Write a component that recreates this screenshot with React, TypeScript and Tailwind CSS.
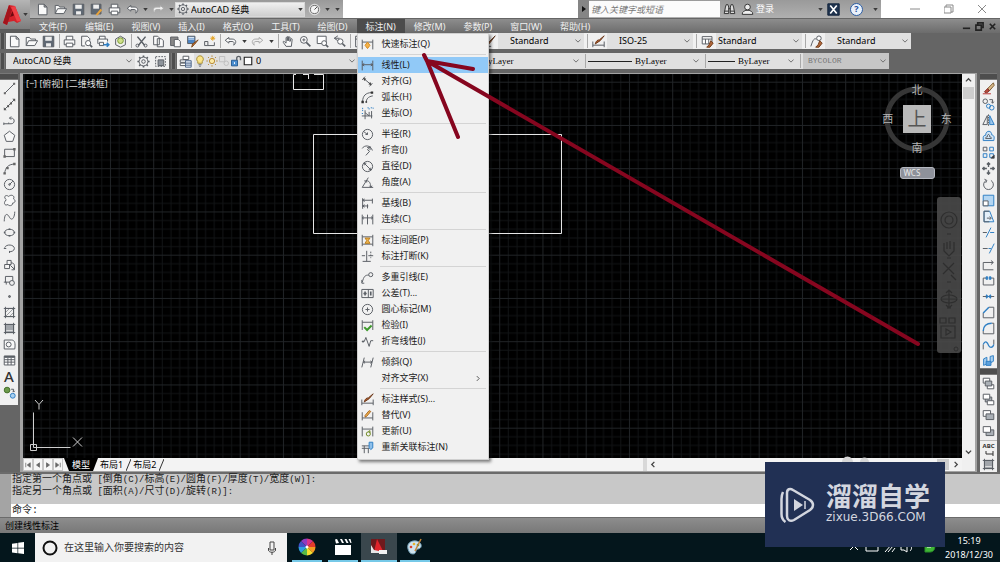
import type { ReactNode } from "react";

const BLUE = "#2f7fc4";
const ORANGE = "#c9742f";

// every drawing lives in a 16x16 box
const icons: Record<string, ReactNode> = {
  new: <path d="M3 1.500h7l3.500 3.500v9.500H3zM10 1.500V5h3.500" fill="#fafafa" />,
  open: <path d="M1.500 13V3h4l1.500 2h6v2M1.500 13l3-6h11l-3.500 6z" fill="#fafafa" />,
  save: (
    <>
      <path d="M1.500 1.500h13v13h-13z" fill="#5f6873" />
      <path d="M4 2h8v5H4zM5 10h6v4H5z" fill="#eee" stroke="none" />
    </>
  ),
  saveAs: (
    <>
      <path d="M1.500 1.500h12v12h-12z" fill="#5f6873" />
      <path d="M4 2h7v5H4z" fill="#eee" stroke="none" />
      <path d="M8 15l6-7" stroke="#e8a33c" strokeWidth="2.500" />
    </>
  ),
  print: (
    <>
      <path d="M4 6V1.500h8V6M4 12H1.500V6h13v6H12" fill="#fafafa" />
      <path d="M4 10h8v4.500H4z" fill="#fff" />
    </>
  ),
  preview: (
    <>
      <path d="M2 1.500h7l3 3V7M2 1.500v12h4" fill="#fafafa" />
      <circle cx="10" cy="10" r="3.200" fill="#fff" />
      <path d="M12.500 12.500L15 15" strokeWidth="2" />
    </>
  ),
  publish: (
    <>
      <path d="M3 5V1.500h7V5M2 10.500H1V5h12v3" fill="#fafafa" />
      <path d="M3 9h5v4H3z" />
      <path d="M8 12h6M12 9.500l2.500 2.500-2.500 2.500" stroke={BLUE} strokeWidth="2" />
    </>
  ),
  box3d: (
    <>
      <path d="M2 5l6-3.500L14 5v7l-6 3-6-3z" fill="#f1f1f1" />
      <circle cx="8" cy="7" r="3.500" fill="#cfe08a" stroke="#7a9a3a" />
    </>
  ),
  cut: (
    <>
      <path d="M3 2l9 11M13 2L4 13" strokeWidth="1.800" />
      <circle cx="3" cy="13" r="1.800" />
      <circle cx="13" cy="13" r="1.800" />
    </>
  ),
  copy: <path d="M2 1.500h5l2 2V12H2zM6.500 4.500h5l2.500 2.500v7.500H6.500z" fill="#fafafa" />,
  paste: (
    <>
      <path d="M2 2.500h9V13H2z" fill="#888" />
      <path d="M6.500 5.500h5l2.500 2.500v6.500H6.500z" fill="#fafafa" />
    </>
  ),
  match: (
    <>
      <path d="M2 1.500h9v9H2z" fill="#4d86c6" />
      <path d="M3 3h7M3 5h7" stroke="#e6eef8" />
      <path d="M15 6l-5 6-3 3 1-4z" fill={ORANGE} stroke="#7b4a22" />
    </>
  ),
  block: (
    <>
      <path d="M2 8h4v5h8V9M2 8v5h4" />
      <path d="M12 1v6M9 4h6M10 2l4 4M14 2l-4 4" stroke="#e3a224" />
    </>
  ),
  undo: <path d="M6 3L1.500 6.500 6 10V8h4c2.500 0 3 2 2 4.500 3.500-2 3.500-7.500-2-7.500H6z" fill="#fafafa" />,
  redo: <path d="M10 3l4.500 3.500L10 10V8H6c-2.500 0-3 2-2 4.500C.5 10.500.5 5 6 5h4z" fill="#eee" stroke="#aaa" />,
  pan: <path d="M5 14l-3.500-5c-.6-1 .8-1.700 1.500-.8L5 10V3.500c0-1 1.500-1 1.500 0V7 2.500c0-1 1.600-1 1.600 0V7l.4-4c.2-1 1.600-.8 1.500.2L9.800 8l1.200-3c.4-1 1.700-.5 1.500.4L11.500 14z" fill="#fafafa" />,
  zoom: (
    <>
      <circle cx="6" cy="6" r="4.200" fill="#fff" />
      <path d="M9 9l5 5" strokeWidth="2" />
      <path d="M4 6h4M6 4v4" />
    </>
  ),
  zoomWin: (
    <>
      <path d="M1.500 1.500h11v9h-11z" fill="#fff" />
      <circle cx="10" cy="10" r="3" fill="#fff" />
      <path d="M12 12l3 3" strokeWidth="2" />
    </>
  ),
  zoomPrev: (
    <>
      <path d="M6 1L1.500 4 6 7M2 4h6" />
      <circle cx="9" cy="8" r="3.300" fill="#fff" />
      <path d="M11.500 10.500L15 14" strokeWidth="2" />
    </>
  ),
  sheet: <path d="M2 1.500h12v13H2zM2 5h12M6 5v9" fill="#fafafa" />,
  brush: (
    <>
      <path d="M1 14h9" />
      <path d="M15 1L9 9l-5 5c1-5 2-6 4-6z" fill="#a8592b" stroke="#5d3a22" />
    </>
  ),
  dimStyle: (
    <>
      <path d="M1 8v7M15 8v7M1 12.500h14" />
      <path d="M15 1l-5 6-6 4c1-4 3-5 5-5z" fill="#b05a26" stroke="#6d3a1c" />
    </>
  ),
  tableStyle: (
    <>
      <path d="M1.500 2h12v9h-12zM1.500 5h12M5.500 5v6M9.500 5v6" fill="#fff" />
      <path d="M12 7l3 3-4 5H7l3-3z" fill="#b0673a" stroke="#74401f" />
    </>
  ),
  leaderStyle: (
    <>
      <path d="M1 14c3-9 4-10 7-9" />
      <circle cx="11" cy="4" r="2.800" fill="#fff" />
      <path d="M12 7l3 3-4 5H7l3-3z" fill="#b0673a" stroke="#74401f" />
    </>
  ),
  gear: (
    <>
      <circle cx="8" cy="8" r="5.400" />
      <circle cx="8" cy="8" r="2.200" />
      <path d="M8 .5v2M8 13.500v2M.5 8h2M13.500 8h2M2.700 2.700l1.400 1.400M11.900 11.900l1.400 1.400M13.300 2.700l-1.400 1.400M4.100 11.900l-1.400 1.400" strokeWidth="2" />
    </>
  ),
  workspace: (
    <>
      <path d="M2 2h12v12H2z" strokeDasharray="2 1.500" />
      <path d="M5 6h7v7H5z" fill="#8d939a" />
    </>
  ),
  layers: (
    <>
      <path d="M5 1.500h7v4H5zM1.500 6h7v3h-7zM1.500 10h7v3h-7z" fill="#fff" />
      <path d="M8 7h7v8H8zM8 10h7M8 12.500h7" fill="#dfe8f5" stroke="#526a8c" />
    </>
  ),
  bulb: (
    <>
      <path d="M8 1a4.500 4.500 0 0 0-3 7.800V11h6V8.800A4.500 4.500 0 0 0 8 1z" fill="#fbe58a" stroke="#a58a2c" />
      <path d="M6 13h4M7 15h2" />
    </>
  ),
  sun: (
    <>
      <circle cx="8" cy="8" r="3.500" fill="#fbe9a4" stroke="#b3832c" />
      <path d="M8 .5v2M8 13.500v2M.5 8h2M13.500 8h2M2.700 2.700l1.400 1.400M11.900 11.900l1.400 1.400M13.300 2.700l-1.400 1.400M4.100 11.900l-1.400 1.400" stroke="#b3832c" />
    </>
  ),
  viewport: (
    <g stroke="#bdbdbd">
      <path d="M2 2h7v7H2z" />
      <circle cx="11" cy="11" r="3" />
    </g>
  ),
  lock: (
    <>
      <path d="M2 7h8v7.500H2z" fill="#4c8fd0" stroke="#22588f" />
      <path d="M9 7V4c0-3 5-3 5 0v3" strokeWidth="1.800" />
      <path d="M6 9.500v2.500" stroke="#fff" />
    </>
  ),
  square: <path d="M3 3h10v10H3z" fill="#fff" stroke="#222" strokeWidth="1.500" />,
  binoculars: (
    <g stroke="#333">
      <path d="M3 5l1-3h2l1 3v8H1.500zM13 5l-1-3h-2L9 5v8h5.500z" fill="#ddd" />
      <path d="M7 7h2M1.500 10H7M9 10h5" />
    </g>
  ),
  user: (
    <g stroke="#333" fill="#eee">
      <circle cx="8" cy="5" r="3.500" />
      <path d="M1.500 14c0-4 3-4 4.500-5h4c1.500 1 4.500 1 4.500 5z" />
    </g>
  ),
  exchange: (
    <>
      <path d="M1 1h14v14H1z" fill="#20344f" stroke="#10233c" />
      <path d="M4 3l4 5-4 5M12 3L8 8l4 5" stroke="#fff" strokeWidth="2" />
    </>
  ),
  wheel: (
    <>
      <circle cx="8" cy="8" r="6.500" fill="#f4f4f4" stroke="#dcdcdc" />
      <circle cx="8" cy="8" r="5" stroke="#666" />
      <path d="M8 8l3-3" stroke="#444" />
    </>
  ),
  // draw
  line: (
    <>
      <path d="M2.500 13.500l11-11" />
      <path d="M1 12.500h2.500V15H1zM12.500 1H15v2.500h-2.500z" fill="#666" stroke="none" />
    </>
  ),
  xline: (
    <>
      <path d="M2.500 13.500l11-11" />
      <path d="M1 15v-3.500L4.500 15zM15 1v3.500L11.500 1zM5 9h2.500v2.500H5zM8.500 5.500H11V8H8.500z" fill="#555" stroke="none" />
    </>
  ),
  pline: <path d="M1 12h9c5 0 5-7 0-7H8M1 10.500v3M7 12v-1.500M10 3L8 5l2 2" />,
  polygon: <path d="M8 1.500l6.500 5L12 14H4L1.500 6.500z" fill="#f7f7f7" />,
  rect: (
    <>
      <path d="M2 4h12v9H2z" />
      <path d="M12.500 2.500h3v3h-3zM.5 11.500h3v3h-3z" fill="#666" stroke="none" />
    </>
  ),
  arc: (
    <>
      <path d="M2 14C3 7 6 3 14 2.500" />
      <path d="M.5 12.500h3v3h-3zM4 6h3v3H4zM12.500 1h3v3h-3z" fill="#666" stroke="none" />
    </>
  ),
  circle: (
    <>
      <circle cx="8" cy="8" r="6.300" />
      <path d="M8 8l4-4" />
      <circle cx="8" cy="8" r="1" />
    </>
  ),
  cloud: <path d="M4 7C0 4 3 0 7 3c3-3 8-1 6 3 3 2 2 5-1 5 0 4-5 4-6 2-4 2-6-2-2-6z" fill="#f7f7f7" />,
  spline: <path d="M1.500 14C2 2 6 5 8 9s6 3 6.500-7" />,
  ellipse: (
    <>
      <ellipse cx="8" cy="8" rx="6" ry="4" />
      <path d="M8 3v2M8 11v2M1 8h2M13 8h2" strokeWidth="2" />
    </>
  ),
  ellipseArc: <path d="M2 7c2-5 12-4 12 1 0 3-4 4-6 4M1 8h3M8 11v2.500" />,
  insert: (
    <>
      <path d="M5 3h5v5H5zM2 8h6v5H2z" fill="#f5f5f5" />
      <path d="M10 6c5 0 4 4 4 8M9 9l5 5M14 11v3.500h-3.500" />
    </>
  ),
  makeBlock: (
    <>
      <path d="M3 3h9v7H3zM1 10h3v3" />
      <circle cx="11" cy="11" r="3" fill="#eee" />
    </>
  ),
  point: <circle cx="8" cy="8" r="1.200" fill="#777" />,
  hatch: (
    <>
      <path d="M3 3h10v10H3zM1 3h14M1 13h14M3 1v14M13 1v14" />
      <path d="M3 8l5-5M3 13L13 3M8 13l5-5" strokeWidth=".7" />
    </>
  ),
  gradient: (
    <>
      <path d="M3 3h10v10H3z" fill="#a2a6ab" />
      <path d="M1 3h14M1 13h14M3 1v14M13 1v14" />
      <path d="M4 10.500h8" stroke="#ddd" />
    </>
  ),
  region: (
    <>
      <path d="M1.500 2.500h9c4 0 5 4 4 11h-13z" fill="#f7f7f7" />
      <circle cx="7" cy="8" r="3" />
    </>
  ),
  table: (
    <>
      <path d="M1.500 2.500h13v11h-13zM1.500 7h13M1.500 10h13M6 5v8.500M10 5v8.500" fill="#fff" />
      <path d="M1.500 3.500h13" strokeWidth="2.500" />
    </>
  ),
  addSel: (
    <>
      <circle cx="5" cy="5" r="3.500" fill="#6c9a4a" stroke="#45702a" />
      <circle cx="12" cy="12" r="3" fill="#a9d0f0" stroke={BLUE} />
      <path d="M10 4h3v3M12 6l1 1.500L14.500 6" />
    </>
  ),
  // modify
  erase: (
    <>
      <path d="M1 14.500h10" stroke="#b33" />
      <path d="M14 1L7 8l2 3 6-7z" fill="#d8b98a" stroke="#7b5b2f" />
      <path d="M7 8l-4 4c1 2 3 1 3.500 1L9 11z" fill="#b94a3c" stroke="#7d2d24" />
    </>
  ),
  copyObj: (
    <>
      <circle cx="4" cy="4" r="2.800" />
      <path d="M9 2h4v4M11.500 4.500L13 6.500l1.500-2" />
      <circle cx="8" cy="10" r="2.500" stroke={BLUE} />
      <circle cx="12" cy="12" r="2.800" stroke={BLUE} />
    </>
  ),
  mirror: (
    <>
      <path d="M6.500 2v11H1z" />
      <path d="M9.500 2v11H15z" fill="#9cc7ec" stroke={BLUE} />
      <path d="M8 .5v15" strokeDasharray="2 1" />
    </>
  ),
  offset: (
    <>
      <path d="M1.500 13v-4c0-2 2-2.500 3-2.500C4.500 0 12 0 12 6c4 1 3 4 2.500 7z" fill="#cfe4f6" stroke={BLUE} />
      <path d="M4.500 10.500h7c0-2-1-2-2-2 0-4-3-4-3 0-1 0-2 0-2 2z" />
    </>
  ),
  array: (
    <>
      <path d="M1.500 1.500H6V6H1.500z" />
      <path d="M9.500 1.500H14V6H9.500zM1.500 9.500H6V14H1.500zM9.500 9.500H14V14H9.500z" stroke={BLUE} />
      <path d="M11 15h4v-4z" fill="#222" />
    </>
  ),
  move: <path d="M8 1v5M8 10v5M1 8h5M10 8h5M6 3l2-2 2 2M6 13l2 2 2-2M3 6L1 8l2 2M13 6l2 2-2 2" strokeWidth="1.700" />,
  rotate: <path d="M5 3a6 6 0 1 0 6 0M3 1.500L6 3 4.500 6" />,
  scale: (
    <>
      <path d="M1.500 1.500h13v13h-13z" fill="#b4d6f2" stroke={BLUE} />
      <path d="M1.500 8.500h6v6h-6z" fill="#fff" />
    </>
  ),
  stretch: (
    <>
      <path d="M2.500 1.500h7l5 13h-12z" stroke={BLUE} fill="#e4f0fa" />
      <path d="M9 1.500H2.500v13H9M6 10h5M9.500 8l2 2-2 2" />
    </>
  ),
  trim: (
    <>
      <path d="M1 8h5" />
      <path d="M10 8h5" stroke={BLUE} />
      <path d="M5 14l6-12" stroke={BLUE} />
    </>
  ),
  extend: (
    <>
      <path d="M1 8h6" />
      <path d="M8 8h3" stroke={BLUE} />
      <path d="M9 14l6-12" stroke={BLUE} />
    </>
  ),
  breakPt: <path d="M1.500 14.500v-9h12M11 3l3 2.500L11 8M1.500 14.500H14" />,
  breakObj: (
    <>
      <path d="M6 5H1.500v8.500h13V5H10" />
      <path d="M5 3.500h2v3H5zM9 3.500h2v3H9z" fill={BLUE} stroke={BLUE} />
    </>
  ),
  join: (
    <>
      <path d="M1 8h14" />
      <path d="M5 6l2 2-2 2M11 6L9 8l2 2" stroke={BLUE} strokeWidth="1.800" />
    </>
  ),
  chamfer: (
    <>
      <path d="M1.500 8.500v6h13v-13h-6" />
      <path d="M1.500 8.500l7-7" stroke={BLUE} strokeWidth="1.800" />
    </>
  ),
  fillet: (
    <>
      <path d="M1.500 11v3.500h13v-13H12" />
      <path d="M1.500 11c0-6 4-9.500 10.500-9.500" stroke={BLUE} strokeWidth="1.800" />
    </>
  ),
  blend: (
    <>
      <path d="M1.500 14V8M14.500 2v6" />
      <path d="M1.500 8C4 2 7 6 8 9s5 4 6.500-1" stroke={BLUE} strokeWidth="1.500" />
    </>
  ),
  explode: (
    <>
      <path d="M2 6l4-2v8l-4 2zM10 3l4-1v7l-4 2z" fill="#a8cff0" stroke={BLUE} />
      <path d="M5 9h6v5H5z" fill="#5ea1dc" stroke={BLUE} />
    </>
  ),
  front: (
    <>
      <path d="M1.500 1.500h8v6h-8zM6.500 9.500h8v5h-8z" fill="#fff" />
      <path d="M4 5h8v6H4z" fill="#aab0b6" />
    </>
  ),
  back: (
    <>
      <path d="M4 5h8v6H4z" fill="#aab0b6" />
      <path d="M1.500 1.500h8v6h-8zM6.500 9.500h8v5h-8z" fill="#fff" />
    </>
  ),
  above: (
    <>
      <path d="M1.500 2h9v7h-9z" fill="#fff" />
      <path d="M5 6h9.500v7H5z" fill="#aab0b6" />
    </>
  ),
  under: (
    <>
      <path d="M5 6h9.500v7H5z" fill="#aab0b6" />
      <path d="M1.500 2h9v7h-9z" fill="#fff" />
    </>
  ),
  // dimension menu
  quickDim: (
    <>
      <path d="M1.500 2v12M14.500 2v12M1.500 5h13" />
      <path d="M8 5l3 4-3 4-3-4z" fill="#f3b24a" stroke="#d88a1c" />
    </>
  ),
  linear: <path d="M1.500 2v12M14.500 2v12M1.500 7h13M4 5.500L1.500 7 4 8.500M12 5.500L14.500 7 12 8.500" />,
  aligned: (
    <>
      <path d="M3.500 4.500l8.500 7M1.500 6L5 2M10.500 14l3.500-4" />
      <path d="M2.500 3.500l4 1-2.500 3zM13 12.500l-4-1 2.500-3z" fill="#444" stroke="none" />
    </>
  ),
  arcLen: (
    <>
      <path d="M2 13C2 6 6 2 13 2M6.500 14c0-4 2-7 8-8" />
      <path d="M.5 12h3v3h-3zM12 .5h3v3h-3zM5.500 12.500h2v2h-2z" fill="#333" stroke="none" />
    </>
  ),
  ordinate: (
    <>
      <path d="M5 4v7h9M5 7l5 4V6M13 5v9M1 11h4v4" />
      <path d="M2 1v4M1 8h2M8 1h2v3M12 1h3v2" stroke={BLUE} strokeDasharray="1.500 1" />
    </>
  ),
  radius: (
    <>
      <circle cx="8" cy="8" r="6.300" />
      <path d="M8 8L3.500 4.500M5.500 8H8V5.500" />
    </>
  ),
  jogged: <path d="M1.500 5.500C4 1 12 1 14 8M11.500 3.500L8 7l2.500 2L6 14M7.500 4.500l4-1-.5 4" />,
  diameter: (
    <>
      <circle cx="8" cy="8" r="6.300" />
      <path d="M3.500 3.500l9 9M4 6.500V4h2.500M12 9.500V12H9.500" />
    </>
  ),
  angular: <path d="M15 14H1.500L9 2M6 6c4-1 6 3 6 8M4 6l2 0 1 2M10.500 12l1.500 2 1.500-2" />,
  baseline: <path d="M2 1.500v13M8 9v5M14 2v6M2 4h12M2 11h7M4.500 2.500L2 4l2.500 1.500M4.500 9.500L2 11l2.500 1.500" />,
  continued: <path d="M1.500 2v12M8 2v12M14.500 2v12M1.500 6h13M3.500 4.500L1.500 6l2 1.500M12.500 4.500l2 1.500-2 1.500" />,
  spacing: (
    <>
      <path d="M1.500 1v14M14.500 1v14M1.500 3.500h13M1.500 12.500h13" />
      <path d="M5 5h6L9 8l2 3.500H5L7 8z" fill="#f0b44c" stroke="#b87d1f" />
    </>
  ),
  dimBreak: (
    <>
      <path d="M7 1v13M1 7h4M9 7h6M2 14h10" />
      <path d="M12 2v8" strokeDasharray="2 1.500" />
    </>
  ),
  leader: (
    <>
      <path d="M1.500 14c2-8 4-9 8-9M1 11v4h3" />
      <circle cx="12" cy="4.500" r="2.500" />
    </>
  ),
  tolerance: (
    <>
      <path d="M1 3h14v10H1zM9 3v10" />
      <path d="M3 8h4M5 5.500v5M12 5.500v5" strokeWidth="2" />
    </>
  ),
  center: (
    <>
      <circle cx="8" cy="8" r="6.300" />
      <path d="M5.500 8h5M8 5.500v5" />
    </>
  ),
  inspect: (
    <>
      <path d="M1.500 1.500v12M14.500 1.500v12M1.500 4h13" />
      <path d="M4 10l3.500 3.500L13 8" stroke="#3f9a2e" strokeWidth="2.500" />
    </>
  ),
  jogLine: <path d="M1 8h3l2-5 4 11 2-7h3M2.500 6.500v3" />,
  oblique: <path d="M4 2L1 14M15 2l-3 12M3 7.500h10.500M5 6L3 7.500 5 9M11.500 6l2 1.500-2 1.500" />,
  override: (
    <>
      <path d="M1.500 4v10M14.500 4v10M1.500 11h13" />
      <path d="M12 3L7 9 5 10l0-2 5-6z" fill="#f0b44c" stroke="#a8641f" />
    </>
  ),
  update: (
    <>
      <path d="M1.500 2v12M14.500 2v12M1.500 5h13" />
      <circle cx="9" cy="11" r="2.500" stroke="#6f8a22" />
      <path d="M9 8l2-1v3" stroke="#6f8a22" />
    </>
  ),
  reassoc: (
    <>
      <path d="M1 6h9M4 6v9M9 9v6M1 9h9" />
      <path d="M10 1.500h4.500v7L12 10.500 10 8.500z" fill="#8fc0ea" stroke={BLUE} />
    </>
  ),
};

function Icon({ name, className = "size-[13px]" }: { name: string; className?: string }) {
  return (
    <svg viewBox="0 0 16 16" className={`${className} shrink-0`} fill="none" stroke="#5a5f65" strokeWidth="1.200" aria-hidden="true">
      {icons[name]}
    </svg>
  );
}

function ToolButton({ name, label, className = "w-[17px]" }: { name: string; label?: string; className?: string }) {
  return (
    <button type="button" aria-label={label ?? name} className={`${className} flex h-4 shrink-0 items-center justify-center`}>
      <Icon name={name} />
    </button>
  );
}

function Caret({ className = "w-[10px]" }: { className?: string }) {
  return (
    <button type="button" aria-label="more" className={`${className} flex h-4 shrink-0 items-center justify-center`}>
      <svg viewBox="0 0 6 4" className="h-[3px] w-[5px]" aria-hidden="true">
        <path d="M0 0h6L3 4z" fill="#3a3a3a" />
      </svg>
    </button>
  );
}

function Sep({ className = "w-1" }: { className?: string }) {
  return (
    <span className={`${className} flex h-4 shrink-0 justify-center py-px`}>
      <span className="w-px bg-[#a9a9a9]" />
    </span>
  );
}

type ComboProps = { label: string; value: string; className: string; selectClass?: string; disabled?: boolean };

function Combo({ label, value, className, selectClass = "pl-3", disabled }: ComboProps) {
  return (
    <span className={`${className} relative flex h-4 shrink-0 items-center`}>
      <select aria-label={label} disabled={disabled} className={`${selectClass} h-4 w-full appearance-none bg-transparent leading-4 outline-none`}>
        <option>{value}</option>
      </select>
      <svg viewBox="0 0 8 5" className="pointer-events-none absolute right-[3px] h-1 w-[6px]" fill="none" stroke="#666" strokeWidth="1.200" aria-hidden="true">
        <path d="M.5.5L4 4 7.500.5" />
      </svg>
    </span>
  );
}

const dimensionMenu = [
  [["quickDim", "快速标注(Q)"]],
  [["linear", "线性(L)"], ["aligned", "对齐(G)"], ["arcLen", "弧长(H)"], ["ordinate", "坐标(O)"]],
  [["radius", "半径(R)"], ["jogged", "折弯(J)"], ["diameter", "直径(D)"], ["angular", "角度(A)"]],
  [["baseline", "基线(B)"], ["continued", "连续(C)"]],
  [["spacing", "标注间距(P)"], ["dimBreak", "标注打断(K)"]],
  [["leader", "多重引线(E)"], ["tolerance", "公差(T)..."], ["center", "圆心标记(M)"], ["inspect", "检验(I)"], ["jogLine", "折弯线性(J)"]],
  [["oblique", "倾斜(Q)"], ["", "对齐文字(X)"]],
  [["dimStyle", "标注样式(S)..."], ["override", "替代(V)"], ["update", "更新(U)"], ["reassoc", "重新关联标注(N)"]],
];

function DimensionMenu() {
  return (
    <div className="absolute top-full left-0 z-20 w-[132px] border border-[#d0d0d0] bg-[#f1f1f1] pt-[2px] pb-1 text-[9px] text-[#1a1a1a] shadow-[2px_2px_3px_rgba(0,0,0,0.5)]">
      {dimensionMenu.map((group, i) => (
        <div key={i}>
          {i > 0 && (
            <div className="flex h-[5px] items-center pr-[2px] pl-[22px]">
              <div className="h-px flex-1 bg-[#d4d4d4]" />
            </div>
          )}
          {group.map(([icon, text]) => (
            <button
              key={text}
              type="button"
              className={`flex h-4 w-full items-center pr-2 pl-[3px] text-left leading-4 ${icon === "linear" ? "bg-[#91c9f7]" : ""}`}
            >
              <Icon name={icon} />
              <span className="ml-2 whitespace-nowrap">{text}</span>
              {icon === "" && (
                <svg viewBox="0 0 5 8" className="ml-auto h-[7px] w-1" fill="none" stroke="#333" aria-hidden="true">
                  <path d="M1 1l3 3-3 3" />
                </svg>
              )}
            </button>
          ))}
        </div>
      ))}
    </div>
  );
}

function TitleBar() {
  return (
    <div className="flex h-[18px] bg-white">
      <div className="flex items-center bg-linear-to-b from-[#9a9a9a] to-[#b4b4b4] pl-[3px]">
        {["new", "open", "save", "saveAs", "print", "undo"].map((n) => (
          <ToolButton key={n} name={n} className="w-[18px]" />
        ))}
        <Caret className="w-2" />
        <ToolButton name="redo" className="w-[18px]" />
        <Caret className="w-2" />
        <span className="flex h-[15px] w-[130px] items-center border border-[#d8d8d8] bg-linear-to-b from-[#f0f0f0] to-[#cfcfcf] pl-px">
          <Icon name="gear" className="size-3" />
          <select aria-label="工作空间" className="h-[13px] flex-1 appearance-none bg-transparent pl-[2px] leading-[13px] text-black">
            <option>AutoCAD 经典</option>
          </select>
          <Caret className="w-2" />
        </span>
        <ToolButton name="wheel" className="w-[18px]" />
        <Caret className="w-2" />
        <Caret className="w-3" />
      </div>
      <div className="flex-1" />
      <div className="flex w-[303px] items-center bg-linear-to-b from-[#9a9a9a] to-[#b0b0b0]">
        <button type="button" aria-label="展开" className="flex h-full w-[11px] items-center justify-center bg-[#858585]">
          <svg viewBox="0 0 4 6" className="h-[6px] w-1" aria-hidden="true">
            <path d="M0 0v6l4-3z" fill="#111" />
          </svg>
        </button>
        <input aria-label="搜索" placeholder="键入关键字或短语" className="h-4 w-[131px] bg-[#fbfbfb] pl-[2px] text-[9px] italic outline-none placeholder:text-[#777]" />
        <ToolButton name="binoculars" className="w-[18px]" />
        <ToolButton name="user" className="w-[18px]" />
        <button type="button" className="whitespace-nowrap text-white">登录</button>
        <span className="flex-1" />
        <Caret className="w-2" />
        <ToolButton name="exchange" className="w-[18px]" />
        <button type="button" aria-label="帮助" className="mx-2 flex size-[13px] items-center justify-center rounded-full border border-[#2c5da3] bg-[#e9f1fb] font-bold text-[#1d4f9c]">?</button>
        <Caret className="mr-[2px] w-2" />
      </div>
      <div className="flex w-[119px] items-center justify-between pr-[13px] pl-[29px]">
        {["M0 5h10", "M2 3V1h7v7H7M0 3h7v6H0z", "M1 1l8 8M9 1l-8 8"].map((d) => (
          <button key={d} type="button" aria-label="window" className="flex size-[10px] items-center">
            <svg viewBox="0 0 10 10" className="size-[10px]" fill="none" stroke="#8a8a8a" aria-hidden="true">
              <path d={d} />
            </svg>
          </button>
        ))}
      </div>
    </div>
  );
}

const menus = ["文件(F)", "编辑(E)", "视图(V)", "插入(I)", "格式(O)", "工具(T)", "绘图(D)", "标注(N)", "修改(M)", "参数(P)", "窗口(W)", "帮助(H)"];

function MenuBar() {
  return (
    <nav className="flex h-[15px] border-t border-[#666] bg-linear-to-b from-[#8d8d8d] to-[#6c6c6c] text-[#f0f0f0]">
      {menus.map((m) => (
        <div key={m} className="relative flex">
          <button
            type="button"
            className={`pr-[9px] pl-2 leading-[13px] whitespace-nowrap first:pl-[9px] ${m === "标注(N)" ? "bg-[#4c4c4c]" : ""}`}
          >
            {m}
          </button>
          {m === "标注(N)" && <DimensionMenu />}
        </div>
      ))}
      <div className="ml-auto flex items-center gap-1 pr-[3px]">
        {["M1 7h8", "M3 3V1h6v5H7M1 3.500h6V9H1z", "M2 2l6 6M8 2L2 8"].map((d) => (
          <button key={d} type="button" aria-label="document" className="size-[9px]">
            <svg viewBox="0 0 10 10" className="size-[9px]" fill="none" stroke="#222" strokeWidth="1.800" aria-hidden="true">
              <path d={d} />
            </svg>
          </button>
        ))}
      </div>
    </nav>
  );
}

function Header() {
  return (
    <header className="flex">
      <button type="button" aria-label="应用程序菜单" className="flex w-[30px] items-center border-b-4 border-[#5c5c5c] bg-linear-to-b from-[#b5b5b5] to-[#7d7d7d] pl-[3px]">
        <svg viewBox="0 0 18 22" className="h-[22px] w-[18px]" aria-hidden="true">
          <path d="M6 1l6 1 6 15-4 2-3-2-6 1-1 3-4-2z" fill="#d3222a" />
          <path d="M6 1L0 19l4 2 2-6 3-9z" fill="#a3141c" />
          <path d="M7 13l4-1.500L9.500 7z" fill="#6f0a10" />
          <path d="M8 3l4-1 6 15-4 .5z" fill="#ee4045" />
        </svg>
        <Caret className="w-2" />
      </button>
      <div className="min-w-0 flex-1">
        <TitleBar />
        <MenuBar />
      </div>
    </header>
  );
}

const Grip = () => <span className="mr-px w-[5px] shrink-0 border-x border-[#777] bg-[#4d4d4d]" />;

function StyleGroup({ icon, label, value, selectClass }: { icon: string; label: string; value: string; selectClass?: string }) {
  return (
    <>
      <Sep className="w-[6px]" />
      <ToolButton name={icon} label={label} />
      <Combo label={label} value={value} className="w-[86px] bg-[#e0e0e0]" selectClass={selectClass} />
    </>
  );
}

function Toolbars() {
  return (
    <div className="flex flex-col gap-1 bg-[#656565] pb-1">
      <div className="flex h-4">
        <Grip />
        <div className="flex bg-[#f0f0f0]">
          {["new", "open", "save"].map((n) => <ToolButton key={n} name={n} />)}
          <Sep />
          {["print", "preview", "publish", "box3d"].map((n) => <ToolButton key={n} name={n} />)}
          <Sep />
          {["cut", "copy", "paste", "match", "block"].map((n) => <ToolButton key={n} name={n} />)}
          <Sep />
          <ToolButton name="undo" />
          <Caret />
          <ToolButton name="redo" />
          <Caret />
          <Sep />
          {["pan", "zoom", "zoomWin", "zoomPrev"].map((n) => <ToolButton key={n} name={n} />)}
          <Sep />
          {["sheet", "table", "layers", "copy", "box3d", "match", "gear"].map((n) => <ToolButton key={n} name={n} />)}
          <Sep />
          <StyleGroup icon="brush" label="文字样式" value="Standard" />
          <StyleGroup icon="dimStyle" label="标注样式" value="ISO-25" />
          <StyleGroup icon="tableStyle" label="表格样式" value="Standard" selectClass="pl-[2px]" />
          <StyleGroup icon="leaderStyle" label="多重引线样式" value="Standard" />
        </div>
      </div>
      <div className="flex h-4">
        <Grip />
        <div className="flex bg-[#f0f0f0]">
          <Combo label="工作空间列表" value="AutoCAD 经典" className="w-[129px] bg-[#e0e0e0]" selectClass="pl-[7px]" />
          <ToolButton name="gear" />
          <ToolButton name="workspace" />
        </div>
        <span className="w-[2px]" />
        <Grip />
        <div className="flex bg-[#f0f0f0]">
          <ToolButton name="layers" />
          <div className="flex items-center bg-[#e0e0e0]">
            {["bulb", "sun", "viewport", "lock", "square"].map((n) => (
              <Icon key={n} name={n} className="size-3" />
            ))}
            <Combo label="图层" value="0" className="w-[104px]" selectClass="pl-[2px]" />
          </div>
          {["layers", "sheet", "copy", "match", "square", "gear"].map((n, i) => <ToolButton key={i} name={n} />)}
          <Sep className="w-[6px]" />
          <div className="flex items-center bg-[#e0e0e0] [font-family:'Liberation_Serif',serif]">
            <Combo label="颜色" value="ByLayer" className="w-[116px]" selectClass="pl-4" />
            <Sep className="w-[6px]" />
            <span className="h-px w-11 bg-[#222]" />
            <Combo label="线型" value="ByLayer" className="w-[70px]" selectClass="pl-[3px]" />
            <Sep className="w-[6px]" />
            <span className="h-px w-[27px] bg-[#222]" />
            <Combo label="线宽" value="ByLayer" className="w-[62px]" selectClass="pl-[3px]" />
            <Sep className="w-[6px]" />
            <Combo
              label="打印样式"
              value="BYCOLOR"
              disabled
              className="w-[86px] bg-[#c6c6c6]"
              selectClass="pl-[5px] text-[8px] text-[#777] [font-family:'Liberation_Mono',monospace]"
            />
          </div>
        </div>
      </div>
    </div>
  );
}

const drawTools = ["line", "xline", "pline", "polygon", "rect", "arc", "circle", "cloud", "spline", "ellipse", "ellipseArc", "insert", "makeBlock", "point", "hatch", "gradient", "region", "table"];
const modifyTools = ["erase", "copyObj", "mirror", "offset", "array", "move", "rotate", "scale", "stretch", "trim", "extend", "breakPt", "breakObj", "join", "chamfer", "fillet", "blend", "explode"];

const SideGrip = () => <div className="h-[7px] shrink-0 border-y border-[#777] bg-[#4d4d4d]" />;

function DrawToolbar() {
  return (
    <aside className="w-[18px] shrink-0">
      <SideGrip />
      <div className="flex flex-col bg-[#f0f0f0] pb-[5px]">
        {drawTools.map((n) => <ToolButton key={n} name={n} className="w-[18px]" />)}
        <button type="button" className="h-4 text-[15px] leading-4 font-medium text-[#333]">A</button>
        <ToolButton name="addSel" className="w-[18px]" />
      </div>
    </aside>
  );
}

function ModifyToolbar() {
  return (
    <aside className="mr-[3px] flex w-[17px] shrink-0 flex-col overflow-hidden">
      <SideGrip />
      <div className="flex flex-col bg-[#f0f0f0]">
        {modifyTools.map((n) => <ToolButton key={n} name={n} />)}
      </div>
      <SideGrip />
      <div className="flex flex-1 flex-col bg-[#f0f0f0]">
        {["front", "back", "above", "under"].map((n) => <ToolButton key={n} name={n} />)}
        <div className="my-px h-px shrink-0 bg-[#bbb]" />
        <button type="button" className="h-[14px] shrink-0 text-[6px] leading-[8px] font-bold text-[#333]">
          ABC
          <svg viewBox="0 0 14 6" className="ml-px h-[6px] w-[14px]" fill="none" stroke="#333" aria-hidden="true">
            <path d="M5 1v3h7M12 1v5" />
          </svg>
        </button>
        <ToolButton name="gradient" />
      </div>
    </aside>
  );
}

function ViewCube() {
  return (
    <div className="absolute top-[10px] right-[10px] flex w-[70px] flex-col items-center text-[11px] text-[#b5b5b5]">
      <div className="grid size-[70px] grid-cols-3 grid-rows-3 place-items-center rounded-full bg-[radial-gradient(circle,transparent_27px,#363636_28px,#363636_32px,transparent_33px)]">
        <span className="col-start-2 self-start leading-3">北</span>
        <span className="row-start-2 -ml-3">西</span>
        <span className="row-start-2 flex size-7 items-center justify-center bg-[#b9b9b9] text-[19px] text-[#555]">上</span>
        <span className="row-start-2 -mr-3">东</span>
        <span className="col-start-2 row-start-3 self-end leading-3">南</span>
      </div>
      <button type="button" className="mt-[13px] flex h-3 w-[35px] items-center rounded-[3px] border border-[#b5b8c0] bg-[#8e919a] pl-[3px] text-[8px] text-[#e8e8e8]">
        WCS
      </button>
    </div>
  );
}

function NavBar() {
  return (
    <div className="absolute top-[123px] right-px flex h-[156px] w-6 flex-col items-center justify-between rounded-[3px] bg-[#4a4a4a] py-3 opacity-90">
      <svg viewBox="0 0 24 132" className="h-[132px] w-6" fill="none" stroke="#333" strokeWidth="1.200" aria-hidden="true">
        <circle cx="12" cy="11" r="8" />
        <circle cx="12" cy="11" r="4" />
        <path d="M10 25h4M10 49h4M10 73h4M10 99h4M7 34v8l5 5 5-5v-9M10 33v7M13 32v8M6 54l11 11M17 54L6 65M14 66l5 5M12 82v16M4 90h16M9 84l3-3 3 3M9 96l3 3 3-3M3 109h6v5H3zM12 109h6v5h-6zM4 117h14v12H4zM9 120v6l5-3z" />
        <ellipse cx="12" cy="90" rx="8" ry="4" />
      </svg>
      <svg viewBox="0 0 24 8" className="absolute inset-x-0 bottom-0 h-2 w-6" fill="none" stroke="#333" aria-hidden="true">
        <circle cx="19" cy="4" r="2" />
      </svg>
    </div>
  );
}

function Canvas() {
  return (
    <div className="relative min-h-0 flex-1 overflow-hidden bg-black">
      <svg className="absolute inset-0 size-full" fill="none" aria-hidden="true">
        <defs>
          <pattern id="grid" x="43.700" y="7.700" width="43.250" height="43.250" patternUnits="userSpaceOnUse">
            <path d="M9.150 0v43.250M17.800 0v43.250M26.450 0v43.250M35.100 0v43.250M0 9.150h43.250M0 17.800h43.250M0 26.450h43.250M0 35.100h43.250" stroke="#111315" />
            <path d="M.5 0v43.250M0 .5h43.250" stroke="#212427" />
          </pattern>
        </defs>
        <rect width="100%" height="100%" fill="url(#grid)" />
        <g stroke="#e6e6e6">
          <path d="M273 .5h-2.500v15h30V.5H291M280 .5h6M285.500 1v4" />
          <path d="M290.500 60.500h248v99h-248z" />
        </g>
        <path
          d="M7.500 370.500h6v6h-6zM10.500 373.500v-35M10.500 373.500h37M50 363.500l9 9M59 363.500l-9 9M12 326l4 4.500 4-4.500M16 330.500v5"
          stroke="#cfcfcf"
        />
      </svg>
      <p className="relative pt-1 pl-[3px] text-[9px] leading-3 text-[#dcdcdc]">[−] [俯视] [二维线框]</p>
      <ViewCube />
      <NavBar />
    </div>
  );
}

function Chevron({ d, label }: { d: string; label: string }) {
  return (
    <button type="button" aria-label={label} className="flex size-[13px] items-center justify-center">
      <svg viewBox="0 0 8 8" className="size-[7px]" fill="none" stroke="#444" strokeWidth="1.500" aria-hidden="true">
        <path d={d} />
      </svg>
    </button>
  );
}

function LayoutTabs() {
  return (
    <div className="flex h-[13px] bg-[#f3f3f3] text-[9px] leading-[13px] text-black">
      {["M1 1v6M7 1L3 4l4 3z", "M6 1L2 4l4 3z", "M2 1l4 3-4 3z", "M7 1v6M1 1l4 3-4 3z"].map((d) => (
        <button key={d} type="button" aria-label="layout" className="flex w-[10px] items-center justify-center border border-[#c6c6c6] bg-[#f6f6f6]">
          <svg viewBox="0 0 8 8" className="size-[6px]" fill="#666" stroke="#666" aria-hidden="true">
            <path d={d} />
          </svg>
        </button>
      ))}
      <button type="button" className="ml-px bg-black px-2 text-white [clip-path:polygon(0_0,100%_0,calc(100%-5px)_100%,5px_100%)]">模型</button>
      {["布局1", "布局2"].map((t) => (
        <button key={t} type="button" className="flex items-center gap-[3px] pl-[2px] whitespace-nowrap">
          {t}
          <svg viewBox="0 0 5 12" className="h-3 w-[5px]" stroke="#333" aria-hidden="true">
            <path d="M5 0L0 12" />
          </svg>
        </button>
      ))}
      <div className="ml-auto flex w-[34%] min-w-0 items-center border-l-4 border-[#d8d8d8]">
        <Chevron d="M5 1L2 4l3 3" label="left" />
        <span className="flex-1" />
        <span className="h-[11px] w-3 bg-[#cdcdcd]" />
        <Chevron d="M3 1l3 3-3 3" label="right" />
      </div>
    </div>
  );
}

function DrawingWindow() {
  return (
    <main className="mr-[3px] ml-[2px] flex min-w-0 flex-1 border border-r-2 border-l-[3px] border-[#a3a3a3]">
      <div className="flex min-w-0 flex-1 flex-col">
        <Canvas />
        <LayoutTabs />
      </div>
      <div className="flex w-[13px] shrink-0 flex-col items-center bg-[#f0f0f0] pb-[13px]">
        <Chevron d="M1 5l3-3 3 3" label="up" />
        <span className="h-3 w-[11px] bg-[#cdcdcd]" />
        <span className="flex-1" />
        <Chevron d="M1 3l3 3 3-3" label="down" />
      </div>
    </main>
  );
}

// latin runs sit one pixel smaller, so that two of them fill one han cell
function CommandText({ text }: { text: string }) {
  return (
    <p className="whitespace-pre">
      {text.split(/([\x20-\x7e]+)/).map((part, i) => (i % 2 ? <span key={i} className="text-[9px]">{part}</span> : part))}
    </p>
  );
}

function CommandLine() {
  return (
    <section className="flex h-[46px] shrink-0 border-t-2 border-b border-[#6b6b6b] bg-[#a4a4a4] pl-[11px] text-[10px] leading-[11px] text-[#222] [font-family:'Liberation_Mono','Noto_Sans_CJK_SC',monospace]">
      <div className="flex min-w-0 flex-1 flex-col">
        <div className="flex-1 bg-[#c8c8c8] pl-[1px]">
          <CommandText text="指定第一个角点或 [倒角(C)/标高(E)/圆角(F)/厚度(T)/宽度(W)]:" />
          <CommandText text="指定另一个角点或 [面积(A)/尺寸(D)/旋转(R)]:" />
        </div>
        <label className="flex h-[13px] items-center bg-white pl-[1px]">
          命令:
          <input aria-label="命令" className="h-[11px] w-1/2 outline-none" />
        </label>
      </div>
    </section>
  );
}

function TaskButton({ label, active, children }: { label: string; active?: boolean; children: ReactNode }) {
  return (
    <button type="button" aria-label={label} className={`flex w-9 flex-col items-center ${active ? "bg-[#3a474d]" : "px-[3px]"}`}>
      <span className="flex flex-1 items-center">
        <svg viewBox="0 0 18 18" className="size-[18px]" aria-hidden="true">
          {children}
        </svg>
      </span>
      <span className="h-[2px] w-full bg-[#76c9e8]" />
    </button>
  );
}

function Taskbar() {
  return (
    <footer className="flex h-[29px] shrink-0 bg-[#04161c] text-white">
      <button type="button" aria-label="开始" className="flex w-[35px] items-center justify-center">
        <svg viewBox="0 0 12 12" className="size-3" fill="#fff" aria-hidden="true">
          <path d="M0 1.700l5.500-.8v4.800H0zM6.200.8L12 0v5.700H6.200zM0 6.400h5.500v4.800L0 10.400zM6.200 6.400H12V12l-5.800-.8z" />
        </svg>
      </button>
      <label className="flex w-[252px] items-center bg-[#f2f2f2] px-[7px]">
        <svg viewBox="0 0 16 16" className="size-4" fill="none" stroke="#111" strokeWidth="2" aria-hidden="true">
          <circle cx="8" cy="8" r="6.500" />
        </svg>
        <input aria-label="搜索 Windows" placeholder="在这里输入你要搜索的内容" className="ml-[6px] min-w-0 flex-1 text-[10px] outline-none placeholder:text-[#333]" />
        <svg viewBox="0 0 10 14" className="mr-[3px] h-[14px] w-[10px]" fill="none" stroke="#444" aria-hidden="true">
          <path d="M3 1h4v8H3zM1.500 7v2c0 3 7 3 7 0V7M5 11v3" />
        </svg>
      </label>
      <div className="flex pl-[2px]">
        <TaskButton label="浏览器">
          <g transform="translate(9 9)">
            {["#e53b2c", "#f59a22", "#f7dd2e", "#57b947", "#2e9ee0", "#3f51c5", "#8f3bc0", "#d9348b"].map((c, i) => (
              <path key={c} d="M0 0L0-8.500A8.500 8.500 0 0 1 6-6z" fill={c} transform={`rotate(${i * 45 + 45})`} />
            ))}
            <circle r="1.500" fill="#fff" />
          </g>
        </TaskButton>
        <TaskButton label="视频编辑">
          <path d="M1 7h16v10H1z" fill="#fff" />
          <path d="M1 1.500l2-.5 2 4-3 .5zM6 1h2l2 4H8zM10.500 1h2l2 4h-2zM14.500 1h2l1 4h-1z" fill="#fff" />
        </TaskButton>
        <TaskButton label="AutoCAD" active>
          <path d="M1 1h14v14H1z" fill="#6f1a1d" />
          <path d="M7 1l6 12-9 1z" fill="#e0242b" />
          <path d="M1 15V7l3 5 5 1v2z" fill="#e8e8e8" />
          <path d="M9 12h8v4H9z" fill="#f3f3f3" />
        </TaskButton>
        <TaskButton label="画图">
          <path d="M2 11C0 4 8 1 13 4c4 3 2 7-1 7s-1 5-5 5c-3 0-4-2-5-5z" fill="#cfe3ee" stroke="#6f9db5" />
          <circle cx="5" cy="9" r="1.300" fill="#d8402f" />
          <circle cx="8" cy="6" r="1.300" fill="#e8b22c" />
          <circle cx="12" cy="7" r="1.300" fill="#3a9a48" />
          <path d="M15 1L9 13" stroke="#c48438" strokeWidth="1.500" />
        </TaskButton>
      </div>
      <div className="ml-auto flex items-center gap-[7px]">
        <svg viewBox="0 0 90 12" className="h-3 w-[90px]" fill="none" stroke="#fff" aria-hidden="true">
          <path d="M2 8l4-4 4 4M18 2h12v7H18zM37 10l7-8M40 10l5-6M44 10l3-4M53 4h3l3-2v8l-3-2h-3zM62 3c2 2 2 4 0 6" />
          <path d="M77 2h9c2 4 0 8-4 8h-5z" fill="#3fb636" stroke="#2a8f28" />
          <path d="M79 5h4" />
        </svg>
        <div className="pr-[7px] text-center leading-[14px]">
          <p>15:19</p>
          <p>2018/12/30</p>
        </div>
      </div>
    </footer>
  );
}

function Watermark() {
  return (
    <div className="absolute right-[55px] bottom-[15px] z-30 flex h-[85px] w-[180px] items-center gap-[10px] bg-[#213054] pl-[15px] text-[#d3d6df]">
      <svg viewBox="0 0 32 6" className="absolute bottom-full left-[76px] h-[6px] w-8" fill="#d6d6d6" aria-hidden="true">
        <path d="M1 6a5.500 5.500 0 0 1 11 0zM19 6a4.500 4.500 0 0 1 9 0z" />
      </svg>
      <svg viewBox="0 0 36 36" className="size-9 shrink-0" fill="none" stroke="#d3d6df" strokeWidth="2.500" aria-hidden="true">
        <path d="M7 6c0-4 3-5 6-3l17 10c4 3 4 7 0 10L14 33c-4 2-7 0-7-4z" />
        <path d="M3 5c-1 2-1.500 4-1.500 7v15c0 3 1 6 4 8" />
        <path d="M14 12l9 6-9 6z" fill="#d3d6df" stroke="none" />
        <path d="M25 14v8" strokeWidth="1.500" />
      </svg>
      <div className="pb-[3px] whitespace-nowrap">
        <p className="text-[26px] leading-[28px] font-bold">溜溜自学</p>
        <p className="text-[12px] leading-[14px] [font-family:'DejaVu_Sans',sans-serif]">zixue.3D66.COM</p>
      </div>
    </div>
  );
}

function Arrow() {
  return (
    <svg className="pointer-events-none absolute inset-0 z-30 size-full" fill="none" stroke="#86061f" strokeWidth="4" strokeLinecap="round" aria-hidden="true">
      <path d="M424 55l3 6L918 344M427 61l46 8M427 61l31 76" />
    </svg>
  );
}

export default function App() {
  return (
    <div className="relative flex h-screen flex-col overflow-hidden bg-[#656565] text-[9px] text-black [font-family:'Noto_Sans','Noto_Sans_CJK_SC',sans-serif]">
      <Header />
      <Toolbars />
      <div className="flex min-h-0 flex-1">
        <DrawToolbar />
        <DrawingWindow />
        <ModifyToolbar />
      </div>
      <CommandLine />
      <div className="flex h-[15px] shrink-0 items-center bg-linear-to-b from-[#8d8d8d] to-[#787878] pl-[5px]">创建线性标注</div>
      <Taskbar />
      <Arrow />
      <Watermark />
    </div>
  );
}
